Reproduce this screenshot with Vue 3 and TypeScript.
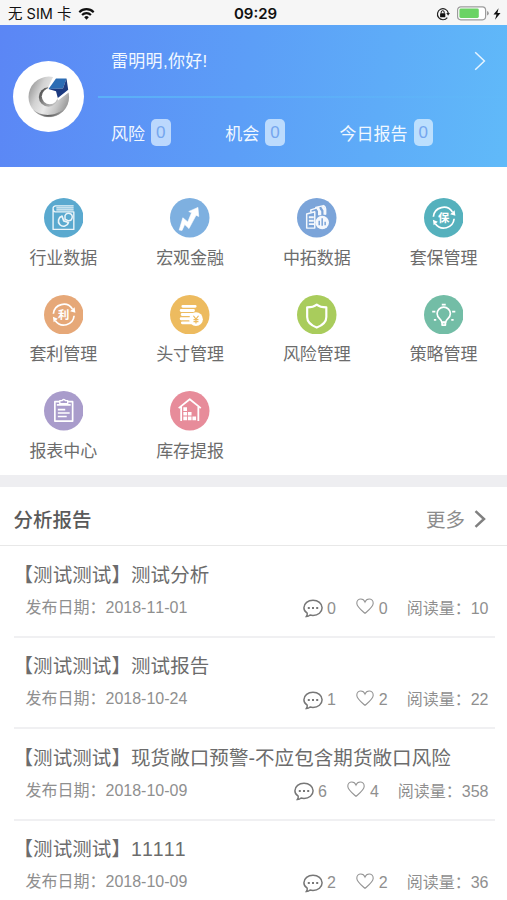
<script setup lang="ts">
interface MenuItem {
  label: string
  icon: string
  color: string
}
interface Report {
  title: string
  date: string
  comments: number
  likes: number
  reads: number
}
interface Counter {
  label: string
  count: number
}

const counters: Counter[] = [
  { label: '风险', count: 0 },
  { label: '机会', count: 0 },
  { label: '今日报告', count: 0 },
]

const menu: MenuItem[] = [
  { label: '行业数据', icon: 'book', color: '#5aa9cf' },
  { label: '宏观金融', icon: 'trend', color: '#7eb0e0' },
  { label: '中拓数据', icon: 'docs', color: '#7ba4d9' },
  { label: '套保管理', icon: 'hedge', color: '#55b1bd' },
  { label: '套利管理', icon: 'arbitrage', color: '#e6a878' },
  { label: '头寸管理', icon: 'coins', color: '#edbb5f' },
  { label: '风险管理', icon: 'shield', color: '#a9cc5c' },
  { label: '策略管理', icon: 'bulb', color: '#73bda6' },
  { label: '报表中心', icon: 'clipboard', color: '#a99ccb' },
  { label: '库存提报', icon: 'warehouse', color: '#e78c9a' },
]

const reports: Report[] = [
  { title: '【测试测试】测试分析', date: '2018-11-01', comments: 0, likes: 0, reads: 10 },
  { title: '【测试测试】测试报告', date: '2018-10-24', comments: 1, likes: 2, reads: 22 },
  { title: '【测试测试】现货敞口预警-不应包含期货敞口风险', date: '2018-10-09', comments: 6, likes: 4, reads: 358 },
  { title: '【测试测试】11111', date: '2018-10-09', comments: 2, likes: 2, reads: 36 },
]
</script>

<template>
  <div class="screen">
    <div class="status">
      <div class="status-side">
        <span class="carrier">无 SIM 卡</span>
        <svg class="wifi" viewBox="0 0 18 13">
          <path d="M9 12.6 6.5 9.9a3.6 3.6 0 0 1 5 0z" fill="#111" />
          <path d="M4.2 7.6a6.8 6.8 0 0 1 9.6 0M1.2 4.5a11 11 0 0 1 15.6 0" fill="none" stroke="#111" stroke-width="2.3" />
        </svg>
      </div>
      <span class="time">09:29</span>
      <div class="status-side right">
        <svg class="lock" viewBox="0 0 14 14">
          <path d="M11.3 10.6A5.5 5.5 0 1 1 12.3 6" fill="none" stroke="#222" stroke-width="1.2" />
          <path d="M10.3 6h3.6l-1.8 2.8z" fill="#222" />
          <rect x="4.1" y="6.2" width="5.2" height="4" rx=".5" fill="#111" />
          <path d="M5.2 6.4V5.2a1.5 1.5 0 0 1 3 0v1.2" fill="none" stroke="#111" stroke-width="1" />
        </svg>
        <svg class="battery" viewBox="0 0 32 15">
          <rect x=".6" y=".8" width="28" height="13" rx="3.2" fill="#fff" stroke="#9c9c9c" stroke-width="1.2" />
          <rect x="2.4" y="2.6" width="19.4" height="9.4" rx="1.4" fill="#6bd364" />
          <path d="M30 5v4.6q1.8-.6 1.8-2.3T30 5z" fill="#9c9c9c" />
        </svg>
        <svg class="bolt" viewBox="0 0 8 12"><path d="M5.6.3.5 6.6h3L2 11.7l5.5-6.6H4.4z" fill="#111" /></svg>
      </div>
    </div>

    <header class="hero">
      <div class="avatar">
        <svg viewBox="0 0 42 42">
          <defs>
            <linearGradient id="ring" x1="0" y1=".3" x2="1" y2=".75">
              <stop offset="0" stop-color="#9a9a9a" />
              <stop offset=".25" stop-color="#d2d2d2" />
              <stop offset=".5" stop-color="#e9e9e9" />
              <stop offset=".75" stop-color="#c4c4c4" />
              <stop offset="1" stop-color="#8f8f8f" />
            </linearGradient>
            <linearGradient id="inner" x1="0" y1=".2" x2="1" y2="1">
              <stop offset="0" stop-color="#4a4a4a" />
              <stop offset=".45" stop-color="#8d8d8d" />
              <stop offset="1" stop-color="#d8d8d8" />
            </linearGradient>
            <linearGradient id="base" x1="0" y1="0" x2="1" y2="0">
              <stop offset="0" stop-color="#b5b5b5" />
              <stop offset=".45" stop-color="#5c5c5c" />
              <stop offset="1" stop-color="#a8a8a8" />
            </linearGradient>
          </defs>
          <circle cx="20.8" cy="20.9" r="20.3" fill="url(#ring)" />
          <path d="M5 33.500C13 41 28 41 38 31.500 31 42.500 14 44.500 5 33.500z" fill="url(#base)" />
          <circle cx="20.500" cy="21" r="9.700" fill="url(#inner)" />
          <circle cx="21.800" cy="20.300" r="8" fill="#fff" />
          <path d="M25.500 0H42v15.500L30 24.500l-3-8.500-8-2z" fill="#fff" />
          <path d="M28 2.500h10.500L35 12.500l-14.500.5z" fill="#2b6cb4" />
          <path d="m38.500 2.500 1.700 11.300L29.800 22 28 15.200l-7.500-2.200 14.500-.5z" fill="#1c3a80" />
        </svg>
      </div>
      <div class="hero-main">
        <div class="greeting">
          <span class="hello">雷明明,你好!</span>
          <svg class="hero-arrow" viewBox="0 0 12 20"><path d="m1.200 1.200 9.200 8.800-9.200 8.800" fill="none" stroke="#e6f4ff" stroke-width="1.500" /></svg>
        </div>
        <div class="line"></div>
        <div class="counters">
          <div v-for="c in counters" :key="c.label" class="counter">
            <span>{{ c.label }}</span>
            <span class="badge">{{ c.count }}</span>
          </div>
        </div>
      </div>
    </header>

    <nav class="menu">
      <div v-for="m in menu" :key="m.label" class="menu-item">
        <svg class="menu-icon" viewBox="0 0 40 40" fill="none" stroke="#fff" stroke-linejoin="round">
          <circle cx="20" cy="20" r="20" :fill="m.color" stroke="none" />
          <g v-if="m.icon === 'book'" stroke-width="1.400" opacity=".88">
            <path d="M30 8H11.500a2.800 2.800 0 0 0-2.300 3v20.800h21V14H11.500a2.500 2.500 0 0 1-2-3M30 10H12.500M30 12H12.500" />
            <path d="M18.300 18.400a5.200 5.200 0 1 0 6.500 6.400l-4.800-1.600z" stroke-width="1.700" />
            <path d="M21.300 21.500v-3.800a3.800 3.800 0 1 1 3 5.300z" stroke-width="1.500" />
          </g>
          <g v-else-if="m.icon === 'trend'">
            <path d="m9.300 32.500 3.700-12.500 5 4.200 3.800-9.200-2.800-1.300L28.300 9.500l.8 9.200-2.700-1.200-7.200 13.500-4.300-4.200-2.700 6z" fill="#fff" stroke-width=".6" />
          </g>
          <g v-else-if="m.icon === 'docs'" opacity=".92">
            <path d="M9.800 16.200 18 14v16.500H9.800zM14 14.300V12l8-2.500v8M19 10.500V9.500l8-1.800q2 1.500 2 3.500v5.500" stroke-width="1.500" />
            <path d="m20.500 10 2.800 4v3.500M25.500 8.200l2.600 4V17" stroke-width="2.600" />
            <path d="M12 19.500h5M12 23h5M12 26.500h6" stroke-width="1.900" />
            <circle cx="25.500" cy="24.800" r="6.900" fill="#fff" stroke="none" />
            <path d="M22.500 27.500v-4.500M25.500 28v-7.500M28.500 27.500v-3.500" :stroke="m.color" stroke-width="1.500" />
          </g>
          <g v-else-if="m.icon === 'hedge' || m.icon === 'arbitrage'">
            <path d="M9.500 19A10.500 10.500 0 0 1 28.800 14.200M30.500 21A10.500 10.500 0 0 1 11.500 26" stroke-width="1.700" />
            <path d="m26.500 16.500 5.300 1.500-.8-5.500zM14 24l-5-2 .8 5.500z" fill="#fff" stroke="none" />
            <text class="glyph" x="20" y="24.300" text-anchor="middle" fill="#fff" stroke="none">{{ m.icon === 'hedge' ? '保' : '利' }}</text>
          </g>
          <g v-else-if="m.icon === 'coins'">
            <path d="M13 11.500h12.500M11.300 15.700h12.500M12.300 19.800h11M11.300 24h8M12.500 28.200h9" stroke-width="2.900" stroke-linecap="round" />
            <circle cx="26.300" cy="24.500" r="7" fill="#fff" stroke="none" />
            <path d="m23.700 21 2.600 3.500 2.600-3.500M26.300 24.500v4.300M23.800 25h5M23.800 27h5" :stroke="m.color" stroke-width="1.200" />
          </g>
          <g v-else-if="m.icon === 'shield'">
            <path d="M20 9.700c2.800 2.300 6 2.800 9.700 2.800v9.800c0 5-4 8.500-9.700 10.700-5.700-2.200-9.700-5.700-9.700-10.700v-9.800c3.700 0 6.900-.5 9.700-2.800z" stroke-width="2.200" />
          </g>
          <g v-else-if="m.icon === 'bulb'" stroke-width="1.700">
            <path d="M18 27.500c0-3-4.700-4-4.700-8.500a6.700 6.700 0 0 1 13.400 0c0 4.500-4.700 5.500-4.700 8.500z" />
            <path d="M18.300 28h3.400v2.500h-3.400zM18 9.800h4M8.300 16.800h3.200M10 25.200h2.400M28.500 16.800h3.200M27.600 25.200h2.400" />
          </g>
          <g v-else-if="m.icon === 'clipboard'" stroke-width="1.700">
            <path d="M16 10.800h-5v19.700h18V10.800h-5M13 14h14M14 18.800h7.500M14 22.300h12M14 25.800h9" />
            <path d="M16 12.800v-3h2.200a2 2 0 0 1 3.600 0H24v3z" stroke-width="1.400" />
          </g>
          <g v-else stroke-width="1.800">
            <path d="M8.800 17.300 20 8.300l11.200 9M11.300 16v14.500M28.700 16v14.500" />
            <path d="M13.500 16.500h3.700v3.700h-3.700zM13.500 21.200h3.700v3.700h-3.700zM18.100 21.200h3.700v3.700h-3.700zM13.500 25.900h3.700v3.700h-3.700zM18.100 25.900h3.700v3.700h-3.700zM22.700 25.900h3.700v3.700h-3.700z" fill="#fff" stroke="none" />
          </g>
        </svg>
        <span class="menu-label">{{ m.label }}</span>
      </div>
    </nav>

    <section class="reports">
      <div class="section-head">
        <h2>分析报告</h2>
        <div class="more">
          <span>更多</span>
          <svg class="more-arrow" viewBox="0 0 12 18"><path d="m1.500 1.200 8.500 7.800-8.500 7.800" fill="none" stroke="#808080" stroke-width="2.500" /></svg>
        </div>
      </div>
      <article v-for="r in reports" :key="r.title" class="report">
        <div class="report-title">{{ r.title }}</div>
        <div class="meta">
          <span class="date">发布日期：{{ r.date }}</span>
          <div class="stats">
            <svg class="comment" viewBox="0 0 20 19" fill="none">
              <path d="M4.200 14.200C2.200 13 .9 11 .9 8.800.9 4.500 5 1.200 10 1.200s9.100 3.300 9.100 7.600-4 7.600-9.100 7.600c-1 0-2-.1-2.900-.4-1 .9-2.200 1.400-3.700 1.500.7-1 1-2.200.8-3.300z" stroke="#777" stroke-width="1.500" />
              <path d="M4.800 7.900h2v2h-2zM9 7.900h2v2H9zM13.200 7.900h2v2h-2z" fill="#777" />
            </svg>
            <span class="comment-count">{{ r.comments }}</span>
            <svg class="heart" viewBox="0 0 18 17" fill="none">
              <path d="M9 15.400C5 12 .8 8.800.8 5.300.8 2.800 2.600 1 4.800 1 6.600 1 8.200 2 9 4c.8-2 2.400-3 4.200-3 2.200 0 4 1.800 4 4.300 0 3.500-4.200 6.700-8.200 10.100z" stroke="#949494" stroke-width="1.100" />
            </svg>
            <span class="like-count">{{ r.likes }}</span>
            <span>阅读量：{{ r.reads }}</span>
          </div>
        </div>
      </article>
    </section>
  </div>
</template>

<style>
body {
  background: #fff;
  overflow: hidden;
}
</style>

<style scoped>
.screen {
  width: 507px;
  height: 900px;
  overflow: hidden;
  background: #fff;
  color: #6c6c6c;
  font-family: "Liberation Sans", "Noto Sans CJK SC", sans-serif;
  font-kerning: none;
  white-space: nowrap;
}
.status {
  display: grid;
  grid-template-columns: 1fr auto 1fr;
  align-items: center;
  height: 25px;
  padding: 2px 6px 0 8px;
  box-sizing: border-box;
  background: #f6f6f6;
  color: #111;
}
.status-side {
  display: flex;
  align-items: center;
}
.right {
  justify-content: flex-end;
}
.carrier {
  font-family: Inter, "Noto Sans CJK SC", sans-serif;
  font-size: 14.500px;
  line-height: 20px;
}
.wifi {
  width: 17px;
  height: 12px;
  margin-left: 7px;
}
.time {
  padding-left: 2px;
  font-family: Inter, sans-serif;
  font-size: 15px;
  font-weight: 600;
  line-height: 20px;
}
.lock {
  width: 14px;
  height: 14px;
  margin-right: 7px;
}
.battery {
  width: 32px;
  height: 15px;
  margin-right: 4px;
}
.bolt {
  width: 8px;
  height: 12px;
}
.hero {
  display: flex;
  height: 142px;
  box-sizing: border-box;
  padding-left: 13px;
  background: linear-gradient(100deg, #5b86f5 0%, #5c9ef7 48%, #60baf9 100%);
  color: #f1f8ff;
  font-size: 17px;
}
.avatar {
  display: flex;
  align-items: center;
  justify-content: center;
  width: 71px;
  height: 71px;
  margin-top: 36px;
  border-radius: 50%;
  background: #fff;
}
.avatar svg {
  width: 42px;
  height: 42px;
}
.hero-main {
  flex: 1;
  margin-left: 14px;
}
.greeting {
  display: flex;
  align-items: center;
  justify-content: space-between;
  height: 71px;
  padding: 0 21px 0 13px;
}
.hello {
  margin-top: -2px;
  letter-spacing: 0.300px;
}
.hero-arrow {
  width: 12px;
  height: 20px;
}
.line {
  height: 2px;
  background: linear-gradient(90deg, #5bb0f8, rgba(96, 186, 249, 0.4));
}
.counters {
  display: grid;
  grid-template-columns: 114.300px 114.300px auto;
  padding: 21px 0 0 13px;
}
.counter {
  display: flex;
  align-items: center;
  gap: 6px;
}
.badge {
  width: 19.500px;
  height: 27px;
  border-radius: 5px;
  background: rgba(224, 240, 255, 0.73);
  color: #75a6ee;
  line-height: 28px;
  text-align: center;
}
.menu {
  display: grid;
  grid-template-columns: repeat(4, 1fr);
  grid-auto-rows: 96.500px;
  height: 308px;
  box-sizing: border-box;
  padding: 31px 0 0;
}
.menu-item {
  display: flex;
  flex-direction: column;
  align-items: center;
}
.menu-icon {
  width: 39.500px;
  height: 39.500px;
}
.menu-label {
  margin-top: 8px;
  font-size: 17px;
  line-height: 25px;
}
.glyph {
  font-family: "Noto Sans CJK SC", sans-serif;
  font-size: 11.500px;
  font-weight: 700;
}
.reports {
  border-top: 12px solid #eeeef1;
}
.section-head {
  display: flex;
  align-items: center;
  justify-content: space-between;
  height: 59px;
  box-sizing: border-box;
  padding: 5px 21px 0 13.500px;
  border-bottom: 1px solid #e8e8e8;
}
h2 {
  margin: 0;
  color: #5a5a5a;
  font-size: 19.500px;
  font-weight: 500;
}
.more {
  display: flex;
  align-items: center;
  gap: 9px;
  color: #8c8c8c;
  font-size: 19.500px;
}
.more-arrow {
  width: 12px;
  height: 18px;
}
.report {
  height: 91.600px;
  box-sizing: border-box;
  margin: 0 12.500px 0 13.500px;
  padding-top: 14.500px;
  border-bottom: 2px solid #f0f0f2;
}
.report-title {
  font-size: 19.500px;
  line-height: 28px;
  letter-spacing: 0.080px;
}
.meta {
  display: flex;
  align-items: center;
  justify-content: space-between;
  height: 26px;
  margin-top: 6px;
  padding: 0 6px 0 12px;
  color: #8f8f8f;
  font-size: 16px;
  line-height: 26px;
}
.stats {
  display: flex;
  align-items: center;
  padding-top: 2px;
}
.comment {
  width: 20px;
  height: 19px;
}
.comment-count {
  margin: 0 20px 0 4px;
}
.heart {
  width: 18px;
  height: 17px;
  margin-top: -4px;
}
.like-count {
  margin: 0 19px 0 5px;
}
</style>
